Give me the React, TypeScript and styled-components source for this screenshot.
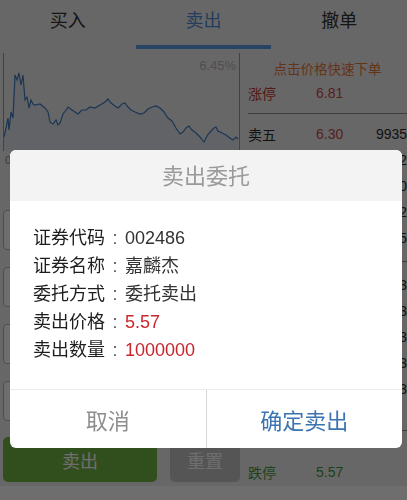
import styled, { createGlobalStyle } from "styled-components";

const GlobalStyle = createGlobalStyle`
  body {
    margin: 0;
    background: #efefef;
    font-family: "Liberation Sans", "Noto Sans CJK SC", sans-serif;
  }
`;

const Page = styled.div`
  width: 407px;
  height: 500px;
  overflow: hidden;
  display: flex;
  flex-direction: column;
  background: #efefef;
`;

const Tabs = styled.div`
  display: flex;
  height: 49px;
  flex-shrink: 0;
`;

const Tab = styled.div<{ $active?: boolean }>`
  flex: 1;
  display: flex;
  justify-content: center;
  padding-top: 6px;
  box-sizing: border-box;
  font-size: 18px;
  color: ${(p) => (p.$active ? "#4f8fd6" : "#333")};
  border-bottom: 4px solid ${(p) => (p.$active ? "#5a9ee8" : "transparent")};
`;

const Main = styled.div`
  display: flex;
  height: 437px;
  padding-top: 4px;
`;

const LeftCol = styled.div`
  width: 237px;
  margin-left: 3px;
  display: flex;
  flex-direction: column;
`;

const Chart = styled.div`
  position: relative;
  height: 98px;
  border-left: 1px solid #9a9a9a;
  border-right: 1px solid #9a9a9a;
`;

const Percent = styled.span`
  position: absolute;
  top: 5px;
  right: 3px;
  font-size: 13px;
  color: #b8b8b8;
`;

const AxisRow = styled.div`
  height: 30px;
  font-size: 11px;
  color: #888;
  padding: 3px 2px;
`;

const Inputs = styled.div`
  display: flex;
  flex-direction: column;
  gap: 17px;
  margin-top: 23px;
`;

const Field = styled.div`
  height: 40px;
  border: 1px solid #b5b5b5;
  border-radius: 4px;
  background: #fff;
  box-sizing: border-box;
`;

const ButtonRow = styled.div`
  display: flex;
  gap: 13px;
  margin-top: 16px;
`;

const ActionButton = styled.div<{ $variant: "sell" | "reset" }>`
  height: 45px;
  flex: ${(p) => (p.$variant === "sell" ? "0 0 154px" : "1")};
  border-radius: 5px;
  background: ${(p) => (p.$variant === "sell" ? "#72b444" : "#c6c6c6")};
  color: #fff;
  font-size: 18px;
  display: flex;
  align-items: center;
  justify-content: center;
`;

const RightCol = styled.div`
  flex: 1;
  display: flex;
  flex-direction: column;
  padding-left: 8px;
  font-size: 14px;
`;

const Hint = styled.div`
  text-align: center;
  color: #e8793a;
  font-size: 13.5px;
  padding: 5px 0 2px;
`;

const QuoteRow = styled.div<{ $tone?: "up" | "down" }>`
  display: grid;
  grid-template-columns: 68px 60px 1fr;
  height: 26px;
  align-items: center;
  color: ${(p) => (p.$tone === "up" ? "#c0392b" : p.$tone === "down" ? "#3f9a3f" : "#2a2a2a")};
`;

const Price = styled.span<{ $tone?: "up" | "down" }>`
  color: ${(p) => (p.$tone === "down" ? "#3f9a3f" : "#c84a4a")};
`;

const Divider = styled.div<{ $space?: number }>`
  border-top: 1px solid #8c8c8c;
  margin: ${(p) => p.$space ?? 8}px 0;
`;

const Footer = styled.div`
  height: 14px;
  background: #ffffff;
`;

const Overlay = styled.div`
  position: fixed;
  inset: 0;
  background: rgba(0, 0, 0, 0.57);
  display: flex;
  justify-content: center;
  align-items: flex-start;
  padding-top: 150px;
`;

const Dialog = styled.div`
  width: 392px;
  margin-left: 5px;
  background: #fff;
  border-radius: 6px;
  overflow: hidden;
`;

const DialogTitle = styled.div`
  height: 51px;
  padding-bottom: 3px;
  box-sizing: border-box;
  background: #f3f3f3;
  display: flex;
  align-items: center;
  justify-content: center;
  font-size: 22px;
  color: #9a9a9a;
`;

const DialogBody = styled.div`
  padding: 23px 23px 25px;
`;

const InfoRow = styled.div`
  display: flex;
  font-size: 18px;
  line-height: 28px;
  color: #1e1e1e;
`;

const Colon = styled.span`
  width: 20px;
  text-align: center;
  color: #555;
`;

const InfoValue = styled.span<{ $red?: boolean }>`
  color: ${(p) => (p.$red ? "#c8262c" : "#333")};
`;

const DialogActions = styled.div`
  display: flex;
  height: 58px;
  border-top: 1px solid #ececec;
`;

const DialogButton = styled.div<{ $primary?: boolean }>`
  flex: 1;
  display: flex;
  align-items: center;
  justify-content: center;
  font-size: 22px;
  color: ${(p) => (p.$primary ? "#3b74b0" : "#8e8e8e")};
  & + & {
    border-left: 1px solid #d6d6d6;
  }
`;

const linePoints =
  "4,137 6,128 8,118 9,130 11,112 13,118 15,75 17,80 19,73 21,85 23,75 25,100 27,97 29,108 31,100 33,104 35,105 40,104 45,108 48,112 50,122 53,124 56,120 58,125 60,123 63,114 66,110 68,107 72,110 75,112 78,114 82,110 86,110 90,107 95,108 100,105 105,102 108,99 111,103 115,106 118,108 122,104 125,103 128,107 131,110 135,112 140,114 144,113 148,109 152,107 156,106 160,108 164,112 168,118 172,121 176,128 180,134 183,132 186,128 189,126 192,130 196,133 200,137 204,142 207,136 210,132 214,128 216,127 218,131 222,133 226,135 230,138 233,140 236,137 238,139";

const asks = [
  ["卖五", "6.30", "9935"],
  ["卖四", "6.29", "1202"],
  ["卖三", "6.28", "3400"],
  ["卖二", "6.27", "2212"],
  ["卖一", "6.26", "1815"],
];

const bids = [
  ["买一", "6.25", "3103"],
  ["买二", "6.24", "2563"],
  ["买三", "6.23", "1373"],
  ["买四", "6.22", "4203"],
  ["买五", "6.21", "2283"],
];

const info: [string, string, boolean?][] = [
  ["证券代码", "002486"],
  ["证券名称", "嘉麟杰"],
  ["委托方式", "委托卖出"],
  ["卖出价格", "5.57", true],
  ["卖出数量", "1000000", true],
];

export default function App() {
  return (
    <>
      <GlobalStyle />
      <Page>
        <Tabs>
          <Tab>买入</Tab>
          <Tab $active>卖出</Tab>
          <Tab>撤单</Tab>
        </Tabs>
        <Main>
          <LeftCol>
            <Chart>
              <Percent>6.45%</Percent>
              <svg width="235" height="98" viewBox="4 53 235 98">
                <polygon
                  points={`4,150 ${linePoints} 238,150`}
                  fill="rgba(120,160,210,0.12)"
                />
                <polyline
                  points={linePoints}
                  fill="none"
                  stroke="#3f7cc4"
                  strokeWidth="1.2"
                />
              </svg>
            </Chart>
            <AxisRow>09:30</AxisRow>
            <Inputs>
              <Field />
              <Field />
              <Field />
              <Field />
            </Inputs>
            <ButtonRow>
              <ActionButton $variant="sell">卖出</ActionButton>
              <ActionButton $variant="reset">重置</ActionButton>
            </ButtonRow>
          </LeftCol>
          <RightCol>
            <Hint>点击价格快速下单</Hint>
            <QuoteRow $tone="up">
              <span>涨停</span>
              <Price>6.81</Price>
            </QuoteRow>
            <Divider $space={7} />
            {asks.map(([label, price, vol]) => (
              <QuoteRow key={label}>
                <span>{label}</span>
                <Price>{price}</Price>
                <span>{vol}</span>
              </QuoteRow>
            ))}
            <Divider $space={10} />
            {bids.map(([label, price, vol]) => (
              <QuoteRow key={label}>
                <span>{label}</span>
                <Price>{price}</Price>
                <span>{vol}</span>
              </QuoteRow>
            ))}
            <Divider $space={28} />
            <QuoteRow $tone="down">
              <span>跌停</span>
              <Price $tone="down">5.57</Price>
            </QuoteRow>
          </RightCol>
        </Main>
        <Footer />
      </Page>
      <Overlay>
        <Dialog>
          <DialogTitle>卖出委托</DialogTitle>
          <DialogBody>
            {info.map(([label, value, red]) => (
              <InfoRow key={label}>
                {label}
                <Colon>:</Colon>
                <InfoValue $red={red}>{value}</InfoValue>
              </InfoRow>
            ))}
          </DialogBody>
          <DialogActions>
            <DialogButton>取消</DialogButton>
            <DialogButton $primary>确定卖出</DialogButton>
          </DialogActions>
        </Dialog>
      </Overlay>
    </>
  );
}
